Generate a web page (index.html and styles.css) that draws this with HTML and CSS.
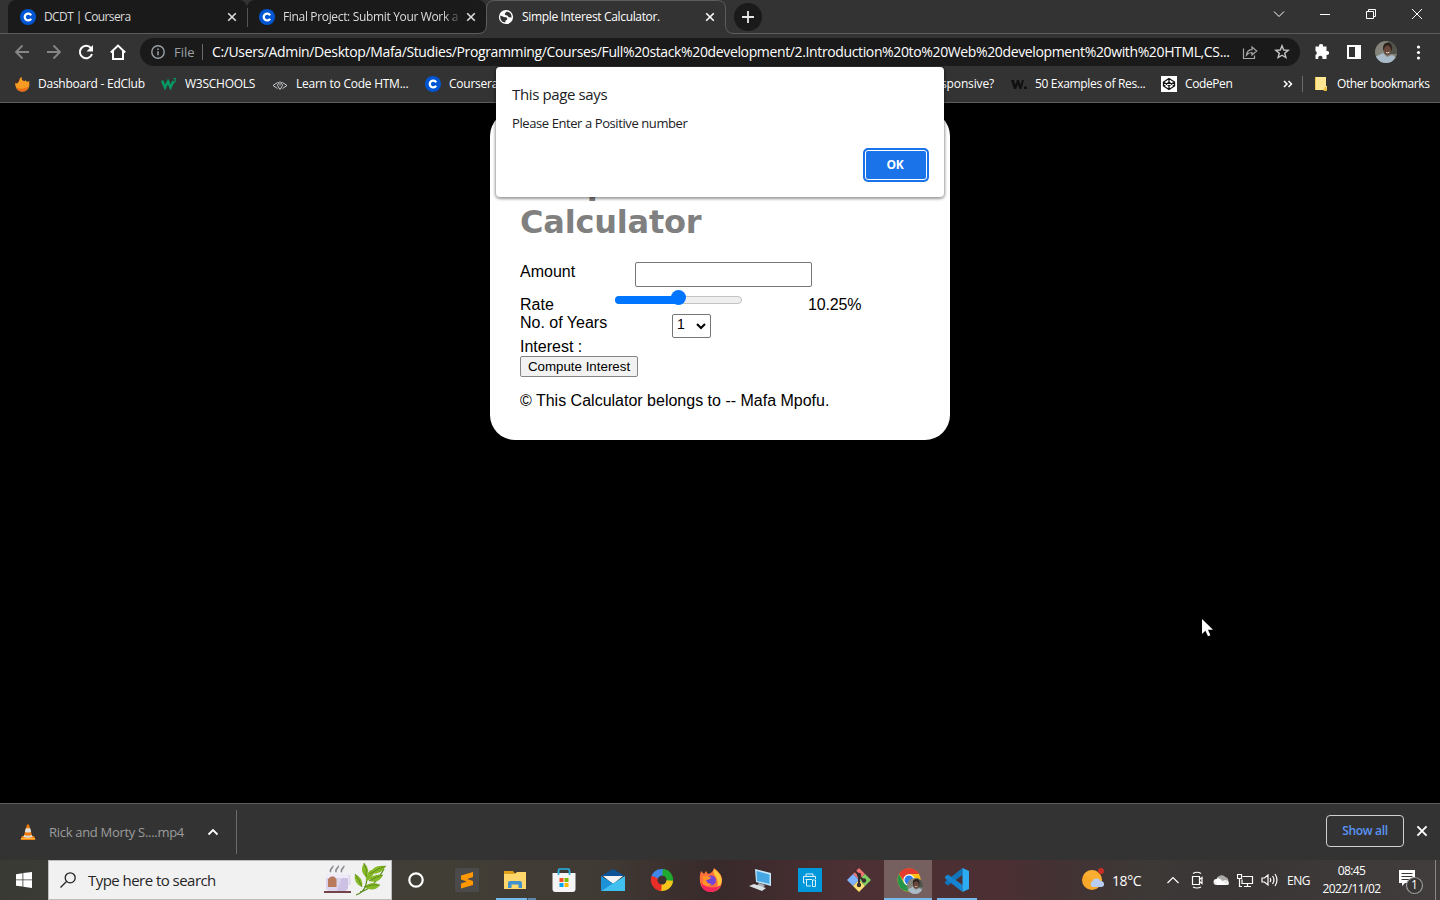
FILE: index.html
```html
<!DOCTYPE html>
<html lang="en">
<head>
<meta charset="utf-8">
<title>Simple Interest Calculator.</title>
<link rel="stylesheet" href="styles.css">
</head>
<body>
<svg class="defs" width="0" height="0" aria-hidden="true">
  <symbol id="coursera" viewBox="0 0 16 16"><circle cx="8" cy="8" r="8" fill="#0056d2"/><path d="M11.1 6.3A3.4 3.4 0 1 0 11.1 9.7" fill="none" stroke="#fff" stroke-width="2.3"/></symbol>
  <symbol id="close" viewBox="0 0 10 10"><path d="M1.200 1.200l7.600 7.600M8.800 1.200l-7.600 7.600" stroke="currentColor" stroke-width="1.600" fill="none"/></symbol>
  <symbol id="avatar" viewBox="0 0 22 22"><clipPath id="round"><circle cx="11" cy="11" r="11"/></clipPath><g clip-path="url(#round)"><path fill="#85847a" d="M0 0h22v22H0z"/><path fill="#4e5248" d="M13 0h9v13h-9z"/><path fill="#a9bac8" d="M0 22v-6l8-4 4 4 5-2 5 3v5z"/><ellipse cx="12.500" cy="7" rx="4.500" ry="5.500" fill="#2c211d"/><ellipse cx="12.500" cy="9.500" rx="3.600" ry="5" fill="#68483a"/><path d="M11 11.500q1.800 1 3.500-.3" stroke="#ddd" fill="none"/></g></symbol>
</svg>
<div class="screen">
  <header class="tabstrip">
    <div class="tab first"><svg class="fav"><use href="#coursera"/></svg><span class="title t1">DCDT | Coursera</span><svg class="x"><use href="#close"/></svg></div>
    <div class="tab second"><svg class="fav"><use href="#coursera"/></svg><span class="title t2">Final Project: Submit Your Work a</span><svg class="x"><use href="#close"/></svg></div>
    <div class="tab active">
      <svg class="outline" width="256" height="35" viewBox="0 0 256 35"><path d="M0 35V33.500Q8.500 33.500 8.500 25V8.500Q8.500.500 16.500.500H239.500Q247.500.500 247.500 8.500V25Q247.500 33.500 256 33.500V35z" fill="#333"/><path d="M0 33.500Q8.500 33.500 8.500 25V8.500Q8.500.500 16.500.500H239.500Q247.500.500 247.500 8.500V25Q247.500 33.500 256 33.500" fill="none" stroke="#5d5d5d"/></svg>
      <svg class="fav" viewBox="0 0 16 16"><circle cx="8" cy="8" r="7.100" fill="#fff"/><path d="M2.300 6.500L6 8q1 .3 2 .3 1.500.2 1.300 1.700-.4 1.200-1.600 1.300l-.5 2.200Q3 13 2.300 9zM9 2.500Q7 3.500 6.800 5q.1 1.300 1.700 1.200 1.500 0 1.700 1.500.3.900 3.300.8Q14 4 9 2.500z" fill="#333"/></svg>
      <span class="title t3">Simple Interest Calculator.</span><svg class="x"><use href="#close"/></svg>
    </div>
    <button class="newtab" aria-label="New tab"><svg width="12" height="12" viewBox="0 0 12 12"><path d="M6 0v12M0 6h12" stroke="#e8e8e8" stroke-width="1.800"/></svg></button>
    <div class="controls">
      <svg viewBox="0 0 46 34"><path d="M18 11.500l5 5 5-5" /></svg>
      <svg viewBox="0 0 46 34"><path d="M18 14.500h10"/></svg>
      <svg viewBox="0 0 46 34"><path d="M18.500 11.500h7v7h-7zM20.500 11V9.500h7v7H26"/></svg>
      <svg viewBox="0 0 46 34"><path d="M18 9l10 10M28 9l-10 10"/></svg>
    </div>
  </header>

  <nav class="toolbar">
    <div class="navicons">
      <svg viewBox="0 0 32 28"><path d="M29 14H16M22.500 7.500L16 14l6.500 6.500" stroke="#868686" stroke-width="1.800" fill="none"/></svg>
      <svg viewBox="0 0 32 28"><path d="M15 14h13M21.500 7.500L28 14l-6.500 6.500" stroke="#868686" stroke-width="1.800" fill="none"/></svg>
      <svg viewBox="0 0 32 28"><path d="M27 10.200A6.200 6.200 0 1 0 28 16" stroke="#fff" stroke-width="2" fill="none"/><path d="M29 7v6.500h-6.500z" fill="#fff"/></svg>
      <svg viewBox="0 0 32 28"><path d="M14.800 14.500L22 7.600l7.200 6.900M17 13v8h10v-8" stroke="#fff" stroke-width="2" fill="none"/></svg>
    </div>
    <div class="omnibox">
      <svg class="info" viewBox="0 0 14 14"><circle cx="7" cy="7" r="6.200" fill="none" stroke="#9aa0a6" stroke-width="1.400"/><path d="M7 6.200v4M7 3.500v1.500" stroke="#9aa0a6" stroke-width="1.500"/></svg>
      <span class="scheme">File</span><i class="vr"></i>
      <span class="url">C:/Users/Admin/Desktop/Mafa/Studies/Programming/Courses/Full%20stack%20development/2.Introduction%20to%20Web%20development%20with%20HTML,CS...</span>
      <svg class="share" viewBox="0 0 16 16"><path d="M1.500 4.500v10h11v-3M4.500 11c.5-3.800 2.500-5.300 5.500-5.300V3l4.700 4-4.700 4V8.500C7.500 8.500 6 9.200 4.500 11z" stroke="#a8a8a8" stroke-width="1.200" fill="none"/></svg>
      <svg class="star" viewBox="0 0 16 16"><path d="M8 1.800l1.700 4.200 4.500.3-3.500 2.900 1.200 4.400L8 11.200l-3.900 2.400 1.200-4.400-3.500-2.900 4.500-.3z" stroke="#c4c4c4" stroke-width="1.400" fill="none"/></svg>
    </div>
    <div class="actions">
      <svg viewBox="0 0 32 28"><path d="M8.500 9h3.600a2 2 0 1 1 3.900 0h3.500v4.500a2 2 0 1 1 0 3.800v4.200h-4.200a2.200 2.200 0 1 0-3.900 0H8.500v-4a2.200 2.200 0 0 0 0-4z" transform="translate(1 -.5)" fill="#fff"/></svg>
      <svg viewBox="0 0 32 28"><path d="M9 7h14v14H9zM11 9v10h6V9z" fill="#fff" fill-rule="evenodd"/></svg>
      <svg viewBox="0 0 32 28"><use href="#avatar" x="5" y="3" width="22" height="22"/></svg>
      <svg viewBox="0 0 32 28"><g fill="#fff"><circle cx="16.500" cy="9" r="1.600"/><circle cx="16.500" cy="14.500" r="1.600"/><circle cx="16.500" cy="20" r="1.600"/></g></svg>
    </div>
  </nav>

  <nav class="bookmarks">
    <div class="bm b1"><svg viewBox="0 0 16 16"><path d="M1 7c2 1 3 0 4-2 1-2 0-3 3-4-1 3 1 4 3 4l1-1c0 2 1 2 3.500 1C14.500 6 16 8 15 11c-1 3-4 5-7 4.500C3 15 1.500 12 1 7z" fill="#f79b23"/><path d="M2.500 11c3 3 9 2 12-1-1 4-4 6-7.500 5.500-2-.5-4-2-4.500-4.500z" fill="#ef6c1a"/><path d="M0 3l3 1 2-1-1 3-3 1z" fill="#412b23"/></svg><span class="k1">Dashboard - EdClub</span></div>
    <div class="bm b2"><svg viewBox="0 0 16 16"><path d="M1 4.500l3 7 3-6 2.500 6 3-6.500" stroke="#059862" stroke-width="2.500" fill="none"/><path d="M12.500 2.500h2.500l-1.500 1.700q2 .2 1 1.700-.8.800-2 .2" stroke="#059862" fill="none"/></svg><span class="k2">W3SCHOOLS</span></div>
    <div class="bm b3"><svg viewBox="0 0 16 16"><path d="M5.500 6.500L1 9.500l4.500 3M10.500 6.500l4.500 3-4.500 3M7 6L5.500 9.500 8 13.500l2.500-4L9 6" stroke="#c7ccd2" fill="none"/><path d="M8 5v5" stroke="#a6a6a6"/></svg><span class="k3">Learn to Code HTM...</span></div>
    <div class="bm b4"><svg><use href="#coursera"/></svg><span class="k4">Coursera</span></div>
    <div class="bm b5"><span class="k5">sponsive?</span></div>
    <div class="bm b6"><svg viewBox="0 0 16 16"><path d="M0 4h3l1 5 2-5h2l1.500 5L11 4h2l-2.500 9H8.500L7 8.500 5 13H3zM13 10.500h3V13h-3z" fill="#101010"/></svg><span class="k6">50 Examples of Res...</span></div>
    <div class="bm b7"><svg viewBox="0 0 16 16"><path fill="#fff" d="M0 0h16v16H0z"/><path d="M8 2.500l5.500 3.500v4L8 13.500 2.500 10V6zM2.500 6L8 9.800 13.500 6M2.500 10L8 6.200l5.500 3.800M8 2.500v3.700M8 9.800v3.700" stroke="#111" stroke-width="1.300" fill="none"/></svg><span class="k7">CodePen</span></div>
    <svg class="more" viewBox="0 0 10 8"><path d="M1 1l3 3-3 3M5.500 1l3 3-3 3" stroke="#fff" stroke-width="1.500" fill="none"/></svg>
    <i class="vr"></i>
    <div class="bm b8"><svg viewBox="0 0 16 16"><path d="M2 1h11v9h1v4H2z" fill="#ffe693"/><path d="M2 1h.8v13H2zM10.500 14l1.500-3h1.800v4H11z" fill="#e9bd3f"/></svg><span class="k8">Other bookmarks</span></div>
  </nav>

  <main class="page">
    <section class="card">
      <h1>Simple Interest Calculator</h1>
      <div class="row amount"><label for="a">Amount</label><input id="a" type="text"></div>
      <div class="row rate"><span>Rate</span><div class="slider"><div class="fill"></div><div class="thumb"></div></div><span class="value">10.25%</span></div>
      <div class="row years"><span>No. of Years</span><div class="select"><span>1</span><svg width="10" height="7" viewBox="0 0 10 7"><path d="M1 1l4 4 4-4" stroke="#000" stroke-width="2" fill="none"/></svg></div></div>
      <div class="row interest">Interest :</div>
      <button class="compute">Compute Interest</button>
      <p>© This Calculator belongs to -- Mafa Mpofu.</p>
    </section>
    <svg class="cursor" width="12" height="18" viewBox="0 0 12 18"><path d="M0 0v15l3.400-3.200L6 17.300l2.400-1L6 10.800h5z" fill="#fff"/></svg>
  </main>

  <section class="shelf">
    <svg class="vlc" viewBox="0 0 16 18"><path d="M2 13h12l1.500 4H.5z" fill="#ef8011"/><path d="M7 1.500h2L12.500 14q-4.500 2-9 0z" fill="#ec7909"/><path d="M5.800 5.200h4.400l1 3.700q-3.200 1-6.400 0zM4 12q4 1.500 8 0l.5 2q-4.500 1.500-9 0z" fill="#dedede"/><path d="M1 15.500h14" stroke="#ffbd42"/></svg>
    <span class="file">Rick and Morty S....mp4</span>
    <svg class="up" viewBox="0 0 12 8"><path d="M1.500 6.500L6 2l4.500 4.500" stroke="#fff" stroke-width="1.800" fill="none"/></svg>
    <i class="vr"></i>
    <button class="showall"><span>Show all</span></button>
    <svg class="x"><use href="#close"/></svg>
  </section>

  <footer class="taskbar">
    <div class="start"><svg width="16" height="16" viewBox="0 0 16 16"><path d="M0 2.200l6.500-1v6.300H0zM7.300 1.100L16 0v7.500H7.300zM0 8.300h6.500v6.300L0 13.700zM7.300 8.300H16V16l-8.700-1.200z" fill="#fff"/></svg></div>
    <div class="search">
      <svg class="mag" viewBox="0 0 16 16"><circle cx="10.200" cy="5.800" r="5" stroke="#222" stroke-width="1.300" fill="none"/><path d="M6.500 9.500L.5 15.500" stroke="#222" stroke-width="1.300"/></svg>
      <span>Type here to search</span>
      <svg class="tea" width="64" height="34" viewBox="0 0 64 34"><path d="M8 9q-1.500-1 .5-3.500T9.500 3M13.500 9q-1.500-1 .5-3.500T15 3M19 9q-1.500-1 .5-3.500T20.500 3" stroke="#8b8790" stroke-width="1.600" fill="none"/><path d="M24 13h2.500v8H24" stroke="#ded5ed" stroke-width="1.600" fill="none"/><path d="M3 11h22v13q0 4-4 4H7q-4 0-4-4z" fill="#dcd3ec"/><path d="M3 11h22v4H3z" fill="#efeaf7"/><path d="M19 15h6v9q0 4-4 4h-7z" fill="#bdaddd" opacity=".5"/><path d="M5 16l3-2.500h3l2.500 2.500v8H5z" fill="#b9795d"/><path d="M1 28h27v2H1z" fill="#744347"/><path d="M33 32q15-5 9-28M37 29q12-2 24-23" stroke="#5f8d22" stroke-width="1.300" fill="none"/><path d="M41 0q7 6 2 14-7-6-2-14zM63 3q-13-2-16 8 11 1 16-8zM60 12q-10-2-14 6 10 3 14-6zM57 22q-8-5-16 2 10 6 16-2zM32 11q9 4 7 13-9-4-7-13zM51 6q-9 2-8 12 8-2 8-12z" fill="#86b926"/><path d="M41 0q4 6 2 14M63 3q-8 2-16 8M60 12q-6 1-14 6M57 22q-8-1-16 2M32 11q4 5 7 13" stroke="#558022" fill="none" stroke-width=".8"/></svg>
    </div>
    <div class="apps">
      <div class="app"><svg viewBox="0 0 24 24"><circle cx="12" cy="12" r="6.700" fill="none" stroke="#fff" stroke-width="2.200"/></svg></div>
      <div class="app sub"><svg viewBox="0 0 24 24"><rect width="24" height="24" rx="1" fill="#4a4a4a"/><path d="M18 4v5l-6 2 6 2v4L6 20.500v-5l6-2-6-2V7.500z" fill="#ff9800"/></svg></div>
      <div class="app open files"><svg viewBox="0 0 24 24"><path d="M1 3h9l1.500 2H23v16H1z" fill="#e0a11b"/><path d="M1 6h11l2-2h9v17H1z" fill="#ffd76b"/><path d="M5 20v-5q0-2 2-2h10q2 0 2 2v5h-3.500v-3.500h-7V20z" fill="#3f91cf"/></svg></div>
      <div class="app"><svg viewBox="0 0 24 24"><path d="M6.500 7V2.500Q6.500 1 8 1h8q1.500 0 1.500 1.500V7" fill="none" stroke="#29b4e8" stroke-width="1.700"/><path d="M.5 5h23v16q0 3-3 3h-17q-3 0-3-3z" fill="#f5f5f5"/><path d="M6.500 5v2M17.500 5v2" stroke="#29b4e8" stroke-width="1.700"/><path fill="#f15124" d="M7.500 10h4v4h-4z"/><path fill="#7fba00" d="M12.500 10h4v4h-4z"/><path fill="#00a4ef" d="M7.500 15h4v4h-4z"/><path fill="#ffb900" d="M12.500 15h4v4h-4z"/></svg></div>
      <div class="app"><svg viewBox="0 0 24 24"><path d="M0 8l12-7 12 7z" fill="#0d5396"/><path d="M2 8h20l-10 8z" fill="#f4f4f4"/><path d="M0 8l13 8-13 7z" fill="#1c93d8"/><path d="M24 8v15H0z" fill="#41c0f0"/></svg></div>
      <div class="app"><svg viewBox="0 0 24 24"><g fill="none" stroke-width="6.500"><path d="M4.200 11.500A7.800 7.800 0 0 1 14 4.500" stroke="#3f87e8"/><path d="M12.500 4.200A7.800 7.800 0 0 1 18 17" stroke="#1fa92e"/><path d="M19.800 12.500A7.800 7.800 0 0 1 10 19.500" stroke="#f6c51b"/><path d="M11.500 19.800A7.800 7.800 0 0 1 5 8.500" stroke="#e92e28"/><path d="M4.800 9A7.800 7.800 0 0 1 10 4.500" stroke="#3f87e8"/></g></svg></div>
      <div class="app"><svg viewBox="0 0 24 24"><path d="M2 3l3 3 2-3 2 3q5-1 6-6 9 6 8 14-1 9-10 10Q2 23 1 14 0 8 2 3z" fill="#ff7139"/><path d="M15 1q9 6 7.500 13-1 5-5 7 3-7-1-13-3-3-1.500-7z" fill="#ffc93b"/><path d="M2 15q1 9 10 9 7-.5 10-7-10 6-20-2z" fill="#f5265c"/><circle cx="12" cy="12.500" r="5" fill="#7446d7"/><path d="M4 8q5 0 8 1-1 3-5 3 1 4 6 4-5 4-9 0z" fill="#ff9328"/></svg></div>
      <div class="app"><svg viewBox="0 0 24 24"><path d="M7 1l16 4v13L8 14z" fill="#c3e6f8"/><path d="M8.500 3l13 3.400v9.500l-12.500-3z" fill="#45a7e4"/><path d="M11 15l6 2-2 3-7-1z" fill="#a9b2b8"/><path d="M1 18l5-2 12 4-4 3z" fill="#dce1e4"/></svg></div>
      <div class="app"><svg viewBox="0 0 24 24"><path fill="#0097db" d="M0 0h24v24H0z"/><path d="M8 8.500V6h7v2.500M7 15H5.500V8.500h12V11M7.500 11.500H14M8.500 12v6H13M14.500 12h3v6.500h-3z" stroke="#d9f2fc" fill="none"/></svg></div>
      <div class="app"><svg viewBox="0 0 24 24"><path d="M12 0l6 6-6 6-6-6z" fill="#f07474"/><path d="M0 12l6-6 6 6-6 6z" fill="#80b3ff"/><path d="M12 12l6-6 6 6-6 6z" fill="#80cf62"/><path d="M6 18l6-6 6 6-6 6z" fill="#ffe075"/><path d="M8 3l4 4v10M12 8l5 5" stroke="#362e2e" stroke-width="2" fill="none"/><g fill="#362e2e"><circle cx="12" cy="7" r="2.200"/><circle cx="12" cy="17" r="2.200"/><circle cx="17" cy="12.500" r="2.200"/></g></svg></div>
      <div class="app open current"><svg viewBox="0 0 26 26"><circle cx="12" cy="12" r="11.500" fill="#fbc116"/><path d="M2 6A11.500 11.500 0 0 1 22 6H12q-5 1-5 7z" fill="#e33b2e"/><path d="M2 6l5 9q3 4 7 2l-3 6.500Q1 22 .5 12 .5 9 2 6z" fill="#24964a"/><circle cx="12" cy="12" r="5.700" fill="#fff"/><circle cx="12" cy="12" r="4.500" fill="#2d7ee8"/><use href="#avatar" x="10" y="10" width="16" height="16"/></svg></div>
      <div class="app open"><svg viewBox="0 0 24 24"><path d="M17.500 0v7L3 17.500 0 15.500v-1.800z" fill="#1275b9"/><path d="M17.500 24v-7L3 6.500 0 8.500v1.800z" fill="#1685d1"/><path d="M17.500 0L24 3v18l-6.500 3z" fill="#2bacf3"/></svg></div>
    </div>
    <div class="tray">
      <svg class="weather" viewBox="0 0 24 24"><circle cx="11" cy="12" r="10" fill="#f7a72a"/><path d="M3 6a10 10 0 1 1 16 12z" fill="#ffc044" opacity=".35"/><circle cx="20" cy="3" r="3" fill="#c92e25"/><path d="M11 19a3.500 3.500 0 0 1 .5-6 4.500 4.500 0 0 1 8 0 3 3 0 0 1 1 6z" fill="#b8cdf4"/></svg>
      <span class="temp">18°C</span>
      <svg class="chev" viewBox="0 0 14 10"><path d="M1.500 8L7 2.500 12.500 8"/></svg>
      <svg class="meet" viewBox="0 0 14 18"><path d="M2.500 5.500h7v8h-7zM9.500 8.500l2.500-2v6l-2.500-2M3 2.500q4-2.500 8 0M3 16q4 2 8 0"/></svg>
      <svg class="cloud" viewBox="0 0 16 12"><path d="M3 11a3 3 0 0 1 0-6 5 5 0 0 1 8-2q4 1 3.500 4a2.500 2.500 0 0 1 0 4z" fill="#ececec"/><path d="M1 6q4-2 6 0l7 5H4z" fill="#fff"/><path d="M4 4a4.500 4.500 0 0 1 8-.5q3 1 3 3.500-4-2-6 0-2-3-5-3z" fill="#a9a9a9"/></svg>
      <svg class="net" viewBox="0 0 17 15"><path d="M5.500 3.500h10v7H5v-4M10.500 10.500v3M7 13.500h7M.5 1.500h4v4h-4zM2.500 5.500v8H5"/></svg>
      <svg class="vol" viewBox="0 0 17 14"><path d="M1 5h2.500L7 2v10L3.500 9H1zM9 5q1.500 2 0 4M11.500 3q3 4 0 8M14 1q4 6 0 12"/></svg>
      <span class="lang">ENG</span>
      <div class="clock"><span class="time">08:45</span><span class="date">2022/11/02</span></div>
      <div class="notice"><svg viewBox="0 0 26 26"><path d="M1 1h16v13H7l-3 3v-3H1z" fill="#fff"/><path d="M3.500 4.500h11M3.500 7.500h11M3.500 10.500h8" stroke="#393634" stroke-width="1"/><circle cx="16.500" cy="16.500" r="8" fill="#393636" stroke="#999"/></svg><span class="badge">1</span></div>
    </div>
  </footer>

  <div class="dialog" role="alertdialog">
    <div class="says">This page says</div>
    <div class="msg">Please Enter a Positive number</div>
    <button class="ok">OK</button>
  </div>
</div>
</body>
</html>
```

FILE: styles.css
```css
* { box-sizing: border-box; }
body { margin: 0; background: #000; overflow: hidden; }
.defs { position: absolute; }
.screen {
  position: relative; width: 1440px; height: 900px; display: flex; flex-direction: column;
  font-family: "Open Sans", "Noto Sans", sans-serif; font-size: 12px; color: #fff; white-space: nowrap; overflow: hidden;
}
svg { display: block; flex: none; }
button { font-family: inherit; margin: 0; padding: 0; }
.vr { display: block; flex: none; width: 1px; background: #6b6b6b; }

/* tabs */
.tabstrip { height: 34px; flex: none; display: flex; padding-left: 8px; background: #333; border-bottom: 1px solid #5d5d5d; }
.tab { position: relative; height: 33px; display: flex; align-items: center; padding-left: 12px; background: #1a1a1a; border-radius: 8px 8px 0 0; color: #dcdcdc; }
.tab .fav { width: 16px; height: 16px; margin-right: 8px; position: relative; }
.tab .title { flex: none; width: 182px; position: relative; }
.tab .x { width: 10px; height: 10px; position: relative; margin-left: 1px; }
.t1 { letter-spacing: -.6px; }
.t2 { letter-spacing: -.340px; }
.t3 { letter-spacing: -.340px; }
.first { width: 239px; }
.first::after { content: ""; position: absolute; right: -1px; top: 8px; width: 1px; height: 19px; background: #555; z-index: 1; }
.second { width: 239px; }
.second .title { -webkit-mask-image: linear-gradient(90deg, #000 160px, transparent 180px); }
.active { width: 240px; background: none; color: #fff; }
.active .outline { position: absolute; left: -8px; top: 0; }
.newtab { width: 28px; height: 28px; margin: 3px 0 0 8px; border: 0; border-radius: 50%; background: #1a1a1a; display: flex; align-items: center; justify-content: center; }
.controls { margin-left: auto; display: flex; }
.controls svg { width: 46px; height: 34px; fill: none; stroke: #fff; stroke-width: 1; }

/* toolbar */
.toolbar { height: 36px; flex: none; display: flex; align-items: center; background: #333; }
.navicons { display: flex; width: 140px; }
.navicons svg, .actions svg { width: 32px; height: 28px; }
.omnibox { width: 1160px; height: 28px; border-radius: 14px; background: #1a1a1a; display: flex; align-items: center; padding-left: 11px; }
.info { width: 14px; height: 14px; margin-right: 9px; }
.scheme { width: 28px; color: #9aa0a6; font-size: 13px; }
.omnibox .vr { height: 16px; margin-right: 9px; }
.url { width: 1030px; font-size: 14px; letter-spacing: -.366px; padding-bottom: 1px; }
.share, .star { width: 16px; height: 16px; }
.star { margin-left: 16px; }
.actions { display: flex; margin-left: 6px; }

/* bookmarks */
.bookmarks { height: 33px; flex: none; display: flex; align-items: center; padding: 0 0 5px 14px; background: #333; border-bottom: 1px solid #5d5d5d; }
.bm { display: flex; align-items: center; gap: 8px; flex: none; letter-spacing: -.250px; }
.bm svg { width: 16px; height: 16px; }
.b1 { width: 147px; } .b2 { width: 111px; } .b3 { width: 153px; } .b4 { width: 516px; }
.b5 { width: 70px; } .b6 { width: 150px; } .b7 { width: 122px; } .b8 { margin-left: 10px; }
.k5 { letter-spacing: -.130px; }
.k6 { letter-spacing: -.330px; }
.k7, .k8 { letter-spacing: -.400px; }
.more { width: 10px; height: 8px; margin-right: 9px; }
.bookmarks .vr { height: 16px; }

/* page */
.page { position: relative; height: 700px; flex: none; background: #000; padding-top: 8px; }
.card { width: 460px; height: 329px; margin: 0 auto; padding: 30px; background: #fff; border-radius: 25px; color: #000; font: 16px/18px "Liberation Sans", Arial, sans-serif; }
h1 { margin: 23px 0 20px; width: 330px; white-space: normal; font: bold 32px/39px Verdana, "DejaVu Sans", sans-serif; letter-spacing: -.200px; color: #808080; }
.row { display: flex; }
.amount { height: 33px; }
.amount label { width: 115px; padding-top: 1px; }
.amount input { width: 177px; height: 25px; margin: 0; border: 1px solid #767676; border-radius: 2px; background: #fff; }
.rate { height: 19px; padding-top: 1px; }
.rate > span:first-child { width: 95px; }
.slider { position: relative; width: 127px; height: 8px; border: 1px solid #c3c3c3; border-radius: 4px; background: #efefef; }
.fill { width: 64px; height: 8px; margin: -1px; border-radius: 4px; background: #0075ff; }
.thumb { position: absolute; left: 54.500px; top: -7.500px; width: 15px; height: 15px; border-radius: 50%; background: #0075ff; }
.value { margin-left: 66px; letter-spacing: -.150px; }
.years { height: 24px; }
.years > span { width: 152px; }
.select { width: 39px; height: 24px; border: 1px solid #767676; border-radius: 2px; display: flex; justify-content: space-between; padding: 0 4px; font-size: 14px; }
.select svg { margin-top: 8px; }
.compute { display: block; width: 118px; height: 21px; border: 1px solid #858585; border-radius: 2px; background: #f2f2f2; font: 13.333px/17px "Liberation Sans", Arial, sans-serif; color: #000; }
.card p { margin: 15px 0 0; }
.cursor { position: absolute; left: 1202px; top: 516px; }

/* download shelf */
.shelf { height: 57px; flex: none; display: flex; align-items: center; padding-left: 20px; background: #333; border-top: 1px solid #5d5d5d; }
.vlc { width: 16px; height: 18px; margin-right: 13px; }
.file { width: 158px; color: #9c9c9c; font-size: 13px; letter-spacing: -.300px; }
.up { width: 12px; height: 8px; margin-right: 17px; }
.shelf .vr { height: 44px; }
.showall { width: 78px; height: 32px; margin: -3px 12px 0 auto; border: 1px solid #d0d0d0; border-radius: 4px; background: none; color: #5a93f5; font-size: 12px; font-weight: 600; letter-spacing: -.300px; }
.shelf .x { width: 12px; height: 12px; margin: -2px 12px 0 0; }

/* taskbar */
.taskbar { height: 40px; flex: none; display: flex; align-items: center; background: linear-gradient(90deg, #3a3a35 0, #413e36 450px, #403a34 600px, #38292a 720px, #4c3034 850px, #4c2f33 1000px, #443133 1050px, #3c3937 1150px, #3a3535 1230px, #403d3c 1440px); }
.start { width: 48px; padding-left: 16px; }
.search { width: 344px; height: 40px; border: 1px solid #bdbdbd; background: #f1f1f1; color: #262626; display: flex; align-items: center; padding-left: 11px; font-size: 15px; }
.mag { width: 16px; height: 16px; margin-right: 12px; }
.search span { width: 235px; letter-spacing: -.540px; }
.apps { display: flex; height: 40px; gap: 1.200px; }
.app { width: 48px; height: 40px; padding: 8px 0 0 12px; position: relative; }
.app svg { width: 24px; height: 24px; }
.sub svg { margin-left: 2px; }
.open::after { content: ""; position: absolute; left: 4px; right: 4px; bottom: 0; height: 2px; background: #76b9ed; }
.files svg { margin-left: 1px; }
.files::after { left: 5.600px; right: 2.400px; background: linear-gradient(90deg, #76b9ed 31px, #3f4a50 31px, #3f4a50 32px, #5c87ab 32px); }
.current { background: #75605f; }
.current svg { width: 26px; height: 26px; margin-left: 1px; }
.current::after { left: 0; right: 0; }
.tray { margin-left: auto; width: 359px; height: 40px; display: flex; align-items: center; border-right: 1px solid #8b8787; margin-right: 4px; }
.tray svg { fill: none; stroke: #fff; stroke-width: 1.200; }
.tray .weather, .tray .cloud, .tray .notice svg { stroke: none; }
.weather { width: 24px; height: 24px; margin: 0 7px 0 4px; }
.temp { width: 54px; font-size: 14px; letter-spacing: -.400px; }
.chev { width: 14px; height: 10px; margin-right: 10px; }
.meet { width: 14px; height: 18px; margin-right: 9px; }
.cloud { width: 17px; height: 12px; margin-right: 7px; }
.net { width: 17px; height: 15px; margin-right: 7px; }
.vol { width: 17px; height: 14px; margin-right: 9px; }
.lang { width: 29px; letter-spacing: -.500px; }
.clock { width: 70px; display: flex; flex-direction: column; align-items: center; line-height: 18px; letter-spacing: -.580px; padding-left: 1px; }
.notice { position: relative; margin: 3px 0 0 12px; }
.notice svg { width: 26px; height: 26px; }
.badge { position: absolute; left: 13px; top: 8px; font-size: 12px; line-height: 16px; }

/* alert */
.dialog { position: absolute; left: 496px; top: 67px; width: 448px; height: 130px; border-radius: 4px; background: #fff; color: #202124; padding: 17px 15px 0 16px; box-shadow: 0 1px 3px 1px rgba(0,0,0,.4); }
.says { font-size: 15px; line-height: 20px; letter-spacing: -.370px; }
.msg { margin-top: 9px; font-size: 13px; line-height: 20px; letter-spacing: -.410px; }
.ok { display: block; width: 66px; height: 34px; margin: 15px 0 0 auto; padding: 0 2px 2px 0; border: 2px solid #1a73e8; border-radius: 5px; background: #1a73e8; box-shadow: inset 0 0 0 1px #fff; color: #fff; font-size: 12px; font-weight: 700; letter-spacing: -.300px; }
```
